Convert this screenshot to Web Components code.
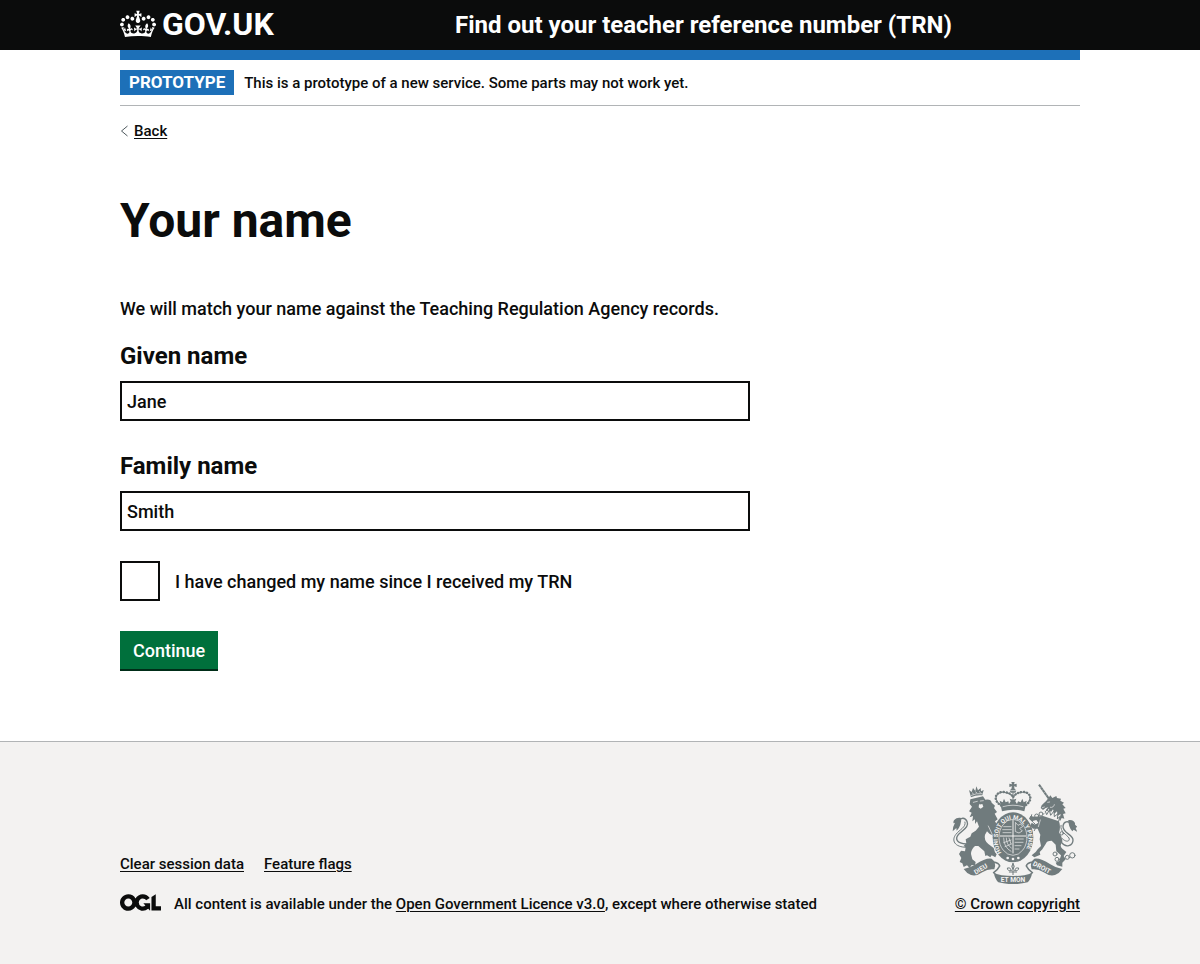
<!DOCTYPE html>
<html lang="en">
<head>
<meta charset="utf-8">
<meta name="viewport" content="width=device-width, initial-scale=1">
<title>Your name - Find out your teacher reference number (TRN)</title>
<style>
  :root {
    --ink: #0b0c0c;
    --blue: #1d70b8;
    --rule: #b1b4b6;
    --shade: #f3f2f1;
    --crest: #707b7d;
  }
  * { box-sizing: border-box; }
  body {
    margin: 0;
    color: var(--ink);
    background: #fff;
    font: 500 18px/25px Roboto, "Liberation Sans", sans-serif;
  }
</style>
</head>
<body>
<service-page>
  <service-header slot="header" href="#" service="Find out your teacher reference number (TRN)"></service-header>
  <phase-banner slot="banner" phase="Prototype">This is a prototype of a new service. Some parts may not work yet.</phase-banner>
  <back-link slot="banner" href="#">Back</back-link>
  <name-form></name-form>
  <service-footer slot="footer"></service-footer>
</service-page>

<template id="page-tpl">
  <style>
    :host { display: flex; flex-direction: column; min-height: 100vh; }
    .width { box-sizing: border-box; width: calc(100% - 60px); max-width: 960px; margin: 0 auto; }
    .bar { height: 10px; background: var(--blue); }
    main { display: block; padding: 40px 0 70px; }
    .foot { flex: 1; display: flex; flex-direction: column; }
    ::slotted([slot="footer"]) { flex: 1; }
  </style>
  <slot name="header"></slot>
  <div class="width">
    <div class="bar"></div>
    <slot name="banner"></slot>
    <main><slot></slot></main>
  </div>
  <div class="foot"><slot name="footer"></slot></div>
</template>

<template id="header-tpl">
  <style>
    :host { display: block; background: var(--ink); color: #fff; }
    header { display: grid; grid-template-columns: 1fr 2fr; align-items: center; width: calc(100% - 60px); max-width: 960px; min-height: 50px; margin: 0 auto; }
    a { color: inherit; text-decoration: none; font-weight: 700; }
    .logo { display: flex; align-items: center; gap: 6px; font-size: 32px; line-height: 40px; padding-bottom: 2px; }
    .logo svg { width: 36px; height: 30px; }
    .service { padding-left: 15px; font-size: 24px; line-height: 30px; }
  </style>
  <header>
    <a class="logo" href="#">
      <svg viewBox="0 0 132 97" aria-hidden="true"><path fill="currentColor" fill-rule="evenodd" d="M25 30.2c3.5 1.5 7.7-.2 9.1-3.7 1.5-3.6-.2-7.8-3.9-9.2-3.6-1.4-7.6.3-9.1 3.9-1.4 3.5.3 7.5 3.9 9zM9 39.5c3.6 1.5 7.8-.2 9.2-3.7 1.5-3.6-.2-7.8-3.9-9.1-3.6-1.5-7.6.2-9.1 3.8-1.4 3.5.3 7.5 3.8 9zM4.4 57.2c3.5 1.5 7.7-.2 9.1-3.8 1.5-3.6-.2-7.7-3.9-9.1-3.5-1.5-7.6.3-9.1 3.8-1.4 3.5.3 7.6 3.9 9.1zm38.3-21.4c3.5 1.5 7.7-.2 9.1-3.8 1.5-3.6-.2-7.7-3.9-9.1-3.6-1.5-7.6.3-9.1 3.8-1.3 3.6.4 7.7 3.9 9.1zm64.4-5.6c-3.6 1.5-7.8-.2-9.1-3.7-1.5-3.6.2-7.8 3.8-9.2 3.6-1.4 7.7.3 9.2 3.9 1.3 3.5-.4 7.5-3.9 9zm15.9 9.3c-3.6 1.5-7.7-.2-9.1-3.7-1.5-3.6.2-7.8 3.7-9.1 3.6-1.5 7.7.2 9.2 3.8 1.5 3.5-.3 7.5-3.8 9zm4.7 17.7c-3.6 1.5-7.8-.2-9.2-3.8-1.5-3.6.2-7.7 3.9-9.1 3.6-1.5 7.7.3 9.2 3.8 1.3 3.5-.4 7.6-3.9 9.1zM89.3 35.8c-3.6 1.5-7.8-.2-9.2-3.8-1.4-3.6.2-7.7 3.9-9.1 3.6-1.5 7.7.3 9.2 3.8 1.4 3.6-.3 7.7-3.9 9.1zM69.7 17.7l8.9 4.7V9.3l-8.9 2.8c-.2-.3-.5-.6-.9-.9L72.4 0H59.6l3.5 11.2c-.3.3-.6.5-.9.9l-8.8-2.8v13.1l8.8-4.7c.3.3.6.7.9.9l-5 15.4v.1c-.2.8-.4 1.6-.4 2.4 0 4.1 3.1 7.5 7 8.1h.2c.3 0 .7.1 1 .1.4 0 .7 0 1-.1h.2c4-.6 7.1-4.1 7.1-8.1 0-.8-.1-1.7-.4-2.4V34l-5.1-15.4c.4-.2.7-.6 1-.9zM66 92.8c16.9 0 32.8 1.1 47.1 3.2 4-16.9 8.9-26.7 14-33.5l-9.6-3.4c1 4.9 1.1 7.2 0 10.2-1.5-1.4-3-4.3-4.2-8.7L108.6 76c2.8-2 5-3.2 7.5-3.3-4.4 9.4-10 11.9-13.6 11.2-4.3-.8-6.3-4.6-5.6-7.9 1-4.7 5.7-5.9 8-.5 4.3-8.7-3-11.4-7.6-8.8 7.1-7.2 7.9-13.5 2.1-21.1-8 6.1-8.1 12.3-4.5 20.8-4.7-5.4-12.1-2.5-9.5 6.2 3.4-5.2 7.9-2 7.2 3.1-.6 4.3-6.4 7.8-13.5 7.2-10.3-.9-10.9-8-11.2-13.8 2.5-.5 7.1 1.8 11 7.3L80.2 60c-4.1 4.4-8 5.3-12.3 5.4 1.4-4.4 8-11.6 8-11.6H55.5s6.4 7.2 7.9 11.6c-4.2-.1-8-1-12.3-5.4l1.4 16.4c3.9-5.5 8.5-7.7 10.9-7.3-.3 5.8-.9 12.8-11.1 13.8-7.2.6-12.9-2.9-13.5-7.2-.7-5 3.8-8.3 7.1-3.1 2.7-8.7-4.6-11.6-9.4-6.2 3.7-8.5 3.6-14.7-4.6-20.8-5.8 7.6-5 13.9 2.2 21.1-4.7-2.6-11.9.1-7.7 8.8 2.3-5.5 7.1-4.2 8.1.5.7 3.3-1.3 7.1-5.7 7.9-3.5.7-9-1.8-13.5-11.2 2.5.1 4.7 1.3 7.5 3.3l-4.7-15.4c-1.2 4.4-2.7 7.2-4.3 8.7-1.1-3-.9-5.3 0-10.2l-9.5 3.4c5 6.9 9.9 16.7 14 33.5 14.8-2.1 30.8-3.2 47.7-3.2z"/></svg>
      <span>GOV.UK</span>
    </a>
    <div class="service"><a class="name" href="#"></a></div>
  </header>
</template>

<template id="phase-tpl">
  <style>
    :host { display: flex; align-items: center; gap: 10px; padding: 10px 0; border-bottom: 1px solid var(--rule); font-size: 15px; line-height: 20px; }
    strong { padding: 0 9px; background: var(--blue); color: #fff; font-size: 17px; font-weight: 700; line-height: 25px; text-transform: uppercase; }
  </style>
  <strong></strong>
  <span><slot></slot></span>
</template>

<template id="back-tpl">
  <style>
    :host { display: flex; margin: 15px 0; font-size: 15px; line-height: 20px; }
    a { display: flex; align-items: center; gap: 6px; color: var(--ink); text-decoration: none; }
    span { text-decoration: underline; text-underline-offset: 2px; }
    svg { width: 8px; height: 12px; fill: none; stroke: #505a5f; }
  </style>
  <a href="#"><svg viewBox="0 0 8 12" aria-hidden="true"><path d="M7.500 1L1.500 6l6 5"/></svg><span><slot></slot></span></a>
</template>

<template id="form-tpl">
  <style>
    :host { display: block; }
    h1 { margin: 0 0 50px; font-size: 48px; font-weight: 700; line-height: 50px; }
    p { margin: 0 0 20px; }
    form { display: grid; gap: 30px; justify-items: start; max-width: 630px; }
    text-field { width: 100%; }
  </style>
  <h1>Your name</h1>
  <p>We will match your name against the Teaching Regulation Agency records.</p>
  <form>
    <text-field name="given" value="Jane">Given name</text-field>
    <text-field name="family" value="Smith">Family name</text-field>
    <check-box name="changed">I have changed my name since I received my TRN</check-box>
    <submit-button>Continue</submit-button>
  </form>
</template>

<template id="field-tpl">
  <style>
    :host { display: block; }
    label { display: block; margin-bottom: 10px; font-size: 24px; font-weight: 700; line-height: 30px; }
    input { display: block; box-sizing: border-box; width: 100%; height: 40px; margin: 0; padding: 5px; border: 2px solid var(--ink); border-radius: 0; background: #fff; color: inherit; font: inherit; }
    input:focus { outline: 3px solid #fd0; }
  </style>
  <label for="input"><slot></slot></label>
  <input id="input" type="text">
</template>

<template id="check-tpl">
  <style>
    :host { display: flex; align-items: center; gap: 15px; }
    input { appearance: none; display: grid; place-items: center; box-sizing: border-box; flex: none; width: 40px; height: 40px; margin: 0; border: 2px solid var(--ink); background: #fff; }
    input:checked::before { content: ""; width: 20px; height: 8px; border: solid; border-width: 0 0 4px 4px; transform: rotate(-45deg); }
  </style>
  <input id="box" type="checkbox">
  <label for="box"><slot></slot></label>
</template>

<template id="button-tpl">
  <style>
    :host { display: block; }
    button { display: block; margin: 0 0 2px; padding: 7px 13px 5px; border: 0; background: #00703c; box-shadow: 0 2px 0 #002d18; color: #fff; font: inherit; line-height: 26px; cursor: pointer; }
  </style>
  <button type="submit"><slot></slot></button>
</template>

<template id="footer-tpl">
  <style>
    :host { display: block; border-top: 1px solid var(--rule); background: var(--shade); font-size: 15px; line-height: 20px; }
    footer { display: flex; align-items: flex-end; justify-content: space-between; gap: 30px; width: calc(100% - 60px); max-width: 960px; margin: 0 auto; padding: 40px 0; }
    a { color: inherit; text-underline-offset: 2px; }
    ul { display: flex; flex-wrap: wrap; gap: 20px; margin: 0 0 20px; padding: 0; list-style: none; }
    .licence { display: flex; align-items: flex-start; gap: 13px; }
    .ogl { width: 41px; height: 17px; flex: none; }
    .copyright { display: flex; flex-direction: column; align-items: flex-end; gap: 10px; }
    royal-arms { width: 125px; height: 102px; margin-right: 3px; }
  </style>
  <footer>
    <div>
      <ul>
        <li><a href="#">Clear session data</a></li>
        <li><a href="#">Feature flags</a></li>
      </ul>
      <div class="licence">
        <svg class="ogl" viewBox="0 0 483.200 195.700" aria-hidden="true"><path fill="currentColor" d="M421.5 142.8V.1l-50.7 32.3v161.1h112.4v-50.7zm-122.3-9.6A47.12 47.12 0 0 1 221 97.8c0-26 21.1-47.1 47.1-47.1 16.7 0 31.4 8.7 39.7 21.8l42.7-27.2A97.63 97.63 0 0 0 268.1 0c-36.5 0-68.3 20.1-85.1 49.7A98 98 0 0 0 97.8 0C43.9 0 0 43.9 0 97.8s43.9 97.8 97.8 97.8c36.5 0 68.3-20.1 85.1-49.7a97.76 97.76 0 0 0 149.6 25.4l19.4 22.2h3v-87.8h-80l24.3 27.5zM97.8 145c-26 0-47.1-21.1-47.1-47.1s21.1-47.1 47.1-47.1 47.1 21.1 47.1 47.1S123.8 145 97.8 145"/></svg>
        <span>All content is available under the <a href="#">Open Government Licence v3.0</a>, except where otherwise stated</span>
      </div>
    </div>
    <div class="copyright">
      <royal-arms></royal-arms>
      <a href="#">© Crown copyright</a>
    </div>
  </footer>
</template>

<template id="arms-tpl">
  <style>
    :host { display: block; }
    svg { display: block; width: 100%; height: 100%; }
    text { font: 700 20px Roboto, "Liberation Sans", sans-serif; fill: var(--shade); }
    .f { fill: var(--crest); }
    .l { fill: var(--shade); }
    .s { fill: none; stroke: var(--crest); stroke-width: 4; stroke-linecap: round; stroke-linejoin: round; }
    .w { fill: none; stroke: var(--shade); stroke-width: 3; stroke-linecap: round; }
  </style>
  <svg viewBox="35 30 375 306" aria-hidden="true">
    <!-- lion -->
    <path class="f" d="M90 82L128 73L135 83Q152 80 154 92L164 101L161 108L170 120L163 125L172 142L164 148L170 158L164 168L170 178L184 190L180 202L170 196L165 203L157 190L148 186L140 178L134 188Q130 204 144 216L160 228L164 241L169 247L165 256L154 250L150 256L140 250L135 252L132 238L114 222L104 222Q92 232 92 246L96 262L106 270L104 280L94 279L88 288L80 280L70 285L66 274L58 270L63 258L56 246L62 236L74 238L76 226L70 222L78 214L76 202L90 194L94 184L106 176L116 164L110 148L104 156L104 142L96 148L98 132L88 136L94 122L86 118L95 104L88 96Z"/>
    <path class="w" d="M99 91l12-3M120 87l9-1M118 97l1 9M144 162l12 26" style="stroke-width:2"/>
    <path class="l" d="M116 98l10-2 3 8-8 6-6-4z"/>
    <path class="f" d="M92 76L86 54L94 60L98 48L105 57L108 43L113 55L121 48L122 58L130 54L126 70Q108 68 92 76Z"/>
    <path class="w" d="M93 70q14-7 32-5M96 63l3 2M106 60l3 2M117 59l3 2" style="stroke-width:2"/>
    <path class="s" d="M78 216C48 214 44 200 54 188C66 174 88 166 80 148C74 136 62 136 56 146"/>
    <path class="s" d="M80 226C40 226 34 204 46 188C58 172 78 166 74 150" style="stroke-width:3"/>
    <path class="f" d="M62 138C48 134 36 146 40 154L44 152Q36 166 37 178L48 168L49 176Q58 166 60 158Q64 148 62 138Z"/>
    <!-- unicorn -->
    <path class="s" d="M296 38L325 79" style="stroke-width:6;stroke-linecap:butt"/>
    <path class="w" d="M299 47l5-2M304 55l5-2M310 63l5-3M316 71l4-3" style="stroke-width:1"/>
    <path class="f" d="M318 86L326 76L330 70L336 78L348 72L350 78L362 80L360 86L371 92L366 97L376 108L369 110L376 124L368 126L372 140L364 138L360 146L312 126L318 112L324 106L316 108L308 114L301 108L304 100Z"/>
    <path class="w" d="M322 91l6-1M306 107l6-2M330 106q10 2 12-8" style="stroke-width:2"/>
    <path class="l" d="M314 116l8 2 2-8 8 10 6-8 4 13 8-7 2 13 9-5-5 23-44-17z"/>
    <path class="s" d="M315 118l4 10 8-14 4 16 10-13 1 17 11-9-2 16 8-8-4 14" style="stroke-width:3"/>
    <path class="f" d="M308 132L356 148Q362 166 356 182Q366 194 366 210Q356 222 366 230L378 240L370 252L376 262L366 272L366 284L350 280L346 272L358 266L362 250L348 238L346 218L334 206Q318 206 316 216L306 232L298 240L300 248L282 256L274 250L286 240L292 232L302 222L298 202L300 188Q296 180 292 170L278 170L270 162L274 152L284 158L294 152L288 144L274 148L266 140L270 132L282 134Z"/>
    <path class="w" d="M300 144l-6 20" style="stroke-width:2"/>
    <path class="s" d="M364 212C376 228 398 222 398 204C398 186 366 184 368 162C370 148 384 146 390 154"/>
    <path class="s" d="M366 200C380 214 390 206 386 198C380 188 358 180 362 160" style="stroke-width:3"/>
    <path class="f" d="M384 144C398 142 406 150 404 158L411 164L406 168L411 180L400 173L396 178Q384 166 384 144Z"/>
    <g class="s" style="stroke-width:3">
      <circle cx="289" cy="132" r="6"/><circle cx="302" cy="126" r="6"/><circle cx="364" cy="184" r="5"/>
      <circle cx="344" cy="246" r="6"/><circle cx="350" cy="262" r="6"/><circle cx="363" cy="263" r="5"/><circle cx="381" cy="256" r="6"/><circle cx="396" cy="250" r="8"/>
      <path d="M274 128q-6 16 6 24t2 24"/>
    </g>
    <!-- crown -->
    <path class="s" d="M183 101C154 84 166 58 190 60Q212 62 218 76Q226 62 246 60C270 58 282 84 254 101" style="stroke-width:7;stroke-dasharray:1 8"/>
    <path class="s" d="M182 100C156 82 168 60 190 61Q212 63 218 76Q224 63 246 61C268 60 280 82 254 100M218 62V96" style="stroke-width:3"/>
    <path class="f" d="M213 30h10l-2 7 8-2v10l-8-2 2 8q8 4 2 11h-14q-6-7 2-11l2-8-8 2v-10l8 2z"/>
    <path class="w" d="M210 56h16" style="stroke-width:2"/>
    <path class="f" d="M180 96L178 86L187 91L191 80L196 91L204 88L206 96L211 88L208 80L218 83L228 80L225 88L230 96L233 88L241 91L246 80L250 91L259 86L257 96L252 118Q218 108 185 118Z"/>
    <path class="w" d="M188 104q30-9 60 0" style="stroke-width:2"/>
    <!-- garter and shield -->
    <ellipse class="f" cx="218" cy="196" rx="61" ry="75"/>
    <ellipse class="w" cx="218" cy="196" rx="42" ry="54" style="stroke-width:2"/>
    <path id="garter" fill="none" d="M184 242A46 60 0 1 1 252 242"/>
    <text style="font-size:18px"><textPath href="#garter">HONI SOIT QUI MAL Y PENSE</textPath></text>
    <path class="w" d="M218 145v98M180 192h76"/>
    <g class="w" style="stroke-width:2">
      <path d="M190 164h22M187 173h26M188 182h24M226 152l7 8 8-4 6 8-9 5 8 8-10 6-10-4z"/>
      <path d="M190 198q0 28 22 40M198 198q0 20 15 30M206 198l6 18M190 212l22-8M194 224l19-8"/>
      <path d="M225 201h24M224 211h24M224 221h18M224 231h12"/>
    </g>
    <g class="l"><circle cx="202" cy="258" r="4"/><circle cx="218" cy="261" r="4"/><circle cx="234" cy="258" r="4"/></g>
    <!-- motto ribbon -->
    <path class="f" d="M70 291Q90 288 106 277Q136 257 154 260Q170 272 162 292Q144 289 126 301Q108 314 92 309Q78 303 70 291Z"/>
    <path class="f" d="M366 291Q346 288 330 277Q300 257 282 260Q266 272 274 292Q292 289 310 301Q328 314 344 309Q358 303 366 291Z"/>
    <path class="s" d="M158 270q18 2 20 12q-6 12-18 20M278 270q-18 2-20 12q6 12 18 20" style="stroke-width:5"/>
    <path class="f" d="M160 301Q170 309 184 310Q218 314 252 310Q266 309 276 301Q272 322 262 331Q218 342 174 331Q164 322 160 301Z"/>
    <text transform="translate(106 308) rotate(-31)">DIEU</text>
    <text x="218" y="331" text-anchor="middle">ET MON</text>
    <text transform="translate(276 279) rotate(28)">DROIT</text>
    <path class="s" d="M218 308V280M218 274q-8 10 0 18q8-8 0-18M213 296q-12 2-12-8q8-4 12 6M223 296q12 2 12-8q-8-4-12 6M207 300h22" style="stroke-width:3"/>
  </svg>
</template>

<script>
  // Clones the named template into an open shadow root.
  const component = (tag, templateId, setup) => {
    customElements.define(tag, class extends HTMLElement {
      constructor() {
        super();
        this.attachShadow({ mode: 'open' })
          .append(document.getElementById(templateId).content.cloneNode(true));
      }
      connectedCallback() {
        if (setup) setup(this, this.shadowRoot);
      }
    });
  };

  component('royal-arms', 'arms-tpl');
  component('text-field', 'field-tpl', (host, root) => {
    const input = root.querySelector('input');
    input.name = host.getAttribute('name');
    input.value = host.getAttribute('value') || '';
  });
  component('check-box', 'check-tpl', (host, root) => {
    root.querySelector('input').name = host.getAttribute('name');
  });
  component('submit-button', 'button-tpl');
  component('name-form', 'form-tpl');
  component('back-link', 'back-tpl', (host, root) => {
    root.querySelector('a').href = host.getAttribute('href');
  });
  component('phase-banner', 'phase-tpl', (host, root) => {
    root.querySelector('strong').textContent = host.getAttribute('phase');
  });
  component('service-header', 'header-tpl', (host, root) => {
    root.querySelector('.name').textContent = host.getAttribute('service');
  });
  component('service-footer', 'footer-tpl');
  component('service-page', 'page-tpl');
</script>
</body>
</html>
